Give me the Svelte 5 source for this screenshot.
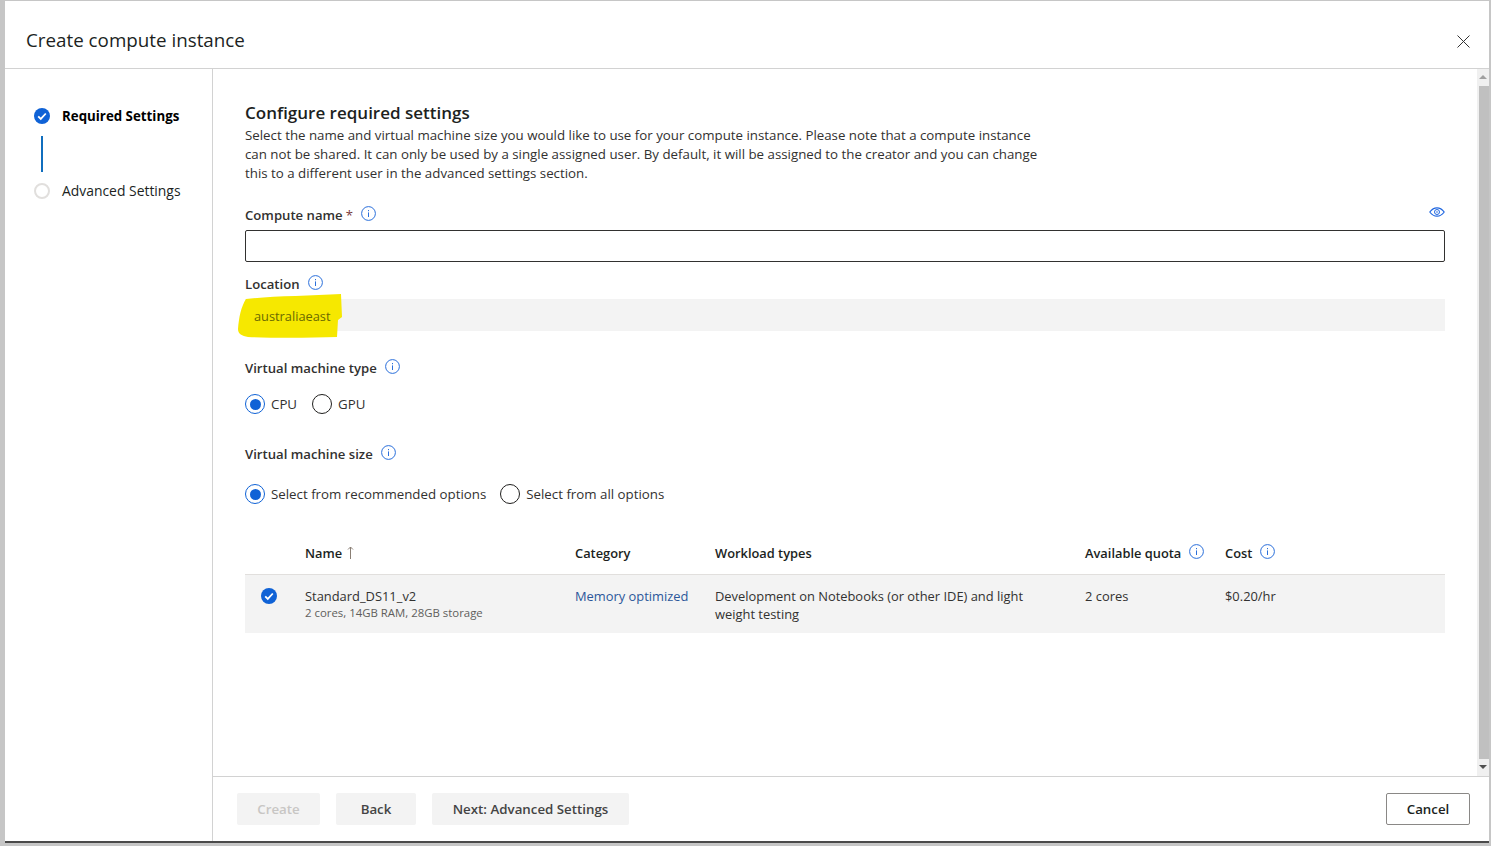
<script>
  const columns = ['Name', 'Category', 'Workload types', 'Available quota', 'Cost'];
</script>

{#snippet info()}
  <svg class="info" width="15" height="15" viewBox="0 0 15 15" aria-hidden="true">
    <circle cx="7.5" cy="7.5" r="6.9" fill="none" stroke="#2a6fdb" stroke-width="1" />
    <rect x="7" y="6.4" width="1" height="4.6" fill="#2a6fdb" />
    <rect x="7" y="4" width="1" height="1.2" fill="#2a6fdb" />
  </svg>
{/snippet}

{#snippet radio(on)}
  <span class="radio" class:on></span>
{/snippet}

{#snippet check(size)}
  <svg width={size} height={size} viewBox="0 0 16 16" aria-hidden="true">
    <circle cx="8" cy="8" r="8" fill="#0f62d6" />
    <path d="M4.2 8.3l2.6 2.6 5-5.4" fill="none" stroke="#fff" stroke-width="1.8" />
  </svg>
{/snippet}

<div class="dialog">
  <header class="title">
    <h1>Create compute instance</h1>
    <svg class="close" width="13" height="13" viewBox="0 0 13 13" aria-hidden="true">
      <path d="M0.5 0.5l12 12M12.5 0.5l-12 12" stroke="#333" stroke-width="1" fill="none" />
    </svg>
  </header>

  <div class="body">
    <nav class="steps">
      <div class="step done">
        <span class="mark">{@render check(16)}</span>
        <span>Required Settings</span>
      </div>
      <div class="connector"></div>
      <div class="step">
        <span class="mark"><span class="todo"></span></span>
        <span class="step-name">Advanced Settings</span>
      </div>
    </nav>

    <div class="right">
      <div class="scroller">
        <main class="content">
          <h2>Configure required settings</h2>
          <p class="desc">
            Select the name and virtual machine size you would like to use for your compute instance. Please note that a compute instance<br />
            can not be shared. It can only be used by a single assigned user. By default, it will be assigned to the creator and you can change<br />
            this to a different user in the advanced settings section.
          </p>

          <div class="label name-label">
            <span class="label-text">Compute name <i>*</i> {@render info()}</span>
            <svg class="eye" width="16" height="10" viewBox="0 0 16 10" aria-hidden="true">
              <path d="M0.8 5C3 2 5.4 0.8 8 0.8S13 2 15.2 5C13 8 10.6 9.2 8 9.2S3 8 0.8 5z" fill="none" stroke="#1f66e0" stroke-width="1.2" />
              <circle cx="8" cy="5" r="2.5" fill="none" stroke="#1f66e0" stroke-width="1" />
              <circle cx="8" cy="5" r="0.8" fill="#1f66e0" />
            </svg>
          </div>
          <div class="input"></div>

          <div class="label loc-label"><span class="label-text">Location {@render info()}</span></div>
          <div class="readonly">
            <span class="loc-value">australiaeast</span>
            <svg class="marker" width="105" height="46" viewBox="0 0 105 46" aria-hidden="true">
              <path d="M8 6C31 3 71 3 103 1L104 24 100 27 99 44C71 45 31 45 10 44 4 43 0 41 0 36 1 24 3 14 8 6z" fill="#f6e800" />
            </svg>
          </div>

          <div class="label vm-type"><span class="label-text">Virtual machine type {@render info()}</span></div>
          <div class="radios type-radios">
            <label>{@render radio(true)}CPU</label>
            <label>{@render radio(false)}GPU</label>
          </div>

          <div class="label vm-size"><span class="label-text">Virtual machine size {@render info()}</span></div>
          <div class="radios size-radios">
            <label>{@render radio(true)}Select from recommended options</label>
            <label>{@render radio(false)}Select from all options</label>
          </div>

          <div class="table">
            <div class="row head">
              <div class="cell"></div>
              <div class="cell">
                {columns[0]}
                <svg class="sort" width="7" height="13" viewBox="0 0 7 13" aria-hidden="true">
                  <path d="M3.5 13V1M1 3.5L3.5 1 6 3.5" fill="none" stroke="#8a7f75" stroke-width="1" />
                </svg>
              </div>
              <div class="cell">{columns[1]}</div>
              <div class="cell">{columns[2]}</div>
              <div class="cell">{columns[3]} {@render info()}</div>
              <div class="cell">{columns[4]} {@render info()}</div>
            </div>
            <div class="row item">
              <div class="cell pick">{@render check(16)}</div>
              <div class="cell">
                Standard_DS11_v2
                <div class="sub">2 cores, 14GB RAM, 28GB storage</div>
              </div>
              <div class="cell"><span class="link">Memory optimized</span></div>
              <div class="cell">Development on Notebooks (or other IDE) and light<br />weight testing</div>
              <div class="cell">2 cores</div>
              <div class="cell">$0.20/hr</div>
            </div>
          </div>
        </main>
        <div class="scrollbar">
          <span class="arrow up"></span>
          <div class="thumb"></div>
          <span class="arrow down"></span>
        </div>
      </div>

      <footer class="actions">
        <button class="btn disabled">Create</button>
        <button class="btn back">Back</button>
        <button class="btn next">Next: Advanced Settings</button>
        <button class="btn cancel">Cancel</button>
      </footer>
    </div>
  </div>
</div>

<style>
  :global(body) {
    margin: 0;
    background: #c6c6c6;
  }

  .dialog {
    box-sizing: border-box;
    height: 842px;
    margin: 1px 2px 0 5px;
    background: #fff;
    border-bottom: 2px solid #4a4a4a;
    display: flex;
    flex-direction: column;
    font-family: "Open Sans", "Noto Sans", sans-serif;
    font-size: 13.3px;
    color: #323130;
  }

  .title {
    flex: none;
    border-bottom: 1px solid #d2d2d2;
    display: flex;
    align-items: center;
    justify-content: space-between;
    padding: 22px 19px 12px 21px;
    box-sizing: border-box;
    height: 68px;
  }

  h1 {
    margin: 0;
    font-size: 18.8px;
    font-weight: 400;
    color: #201f1e;
  }

  .close { margin-top: 3px; }

  .body {
    flex: 1;
    display: flex;
    min-height: 0;
  }

  .steps {
    flex: none;
    border-right: 1px solid #d2d2d2;
    padding: 37px 0 0 29px;
    box-sizing: border-box;
    width: 208px;
  }

  .step {
    display: flex;
    align-items: center;
    height: 20px;
    font-size: 13.9px;
    color: #201f1e;
  }

  .step.done { font-weight: 700; font-size: 13.3px; color: #000; }

  .step-name { margin-top: -2px; }

  .mark {
    width: 16px;
    height: 16px;
    margin-right: 12px;
    display: flex;
  }

  .todo {
    width: 12px;
    height: 12px;
    border: 2px solid #e1dfdd;
    border-radius: 50%;
  }

  .connector {
    width: 2px;
    height: 36px;
    margin: 10px 0 9px 7px;
    background: #106ebe;
  }

  .right {
    flex: 1;
    display: flex;
    flex-direction: column;
    min-width: 0;
  }

  .scroller {
    flex: 1;
    display: flex;
    min-height: 0;
  }

  .content {
    flex: 1;
    min-width: 0;
    padding: 33px 32px 0;
  }

  h2 {
    margin: 0 0 2px;
    font-size: 17px;
    line-height: 22px;
    font-weight: 600;
    color: #201f1e;
  }

  .desc {
    margin: 0;
    line-height: 19px;
    color: #323130;
  }

  .label {
    display: flex;
    align-items: center;
    justify-content: space-between;
    height: 20px;
    font-weight: 600;
    font-size: 13.15px;
    color: #323130;
  }

  .label-text {
    display: flex;
    align-items: center;
    gap: 8px;
  }

  .label-text .info { margin-top: -3px; }

  .label-text i { margin-left: -5px; color: #7a3b3b; font-style: normal; font-weight: 400; }

  .name-label { margin-top: 22px; }

  .eye { margin-top: -6px; }

  .input {
    height: 32px;
    box-sizing: border-box;
    margin-top: 5px;
    border: 1px solid #323130;
    border-radius: 2px;
  }

  .loc-label { margin-top: 12px; }

  .readonly {
    position: relative;
    height: 32px;
    margin-top: 5px;
    background: #f3f3f3;
    display: flex;
    align-items: center;
    padding-left: 9px;
    padding-top: 1px;
    box-sizing: border-box;
  }

  .loc-value { position: relative; z-index: 1; color: #6a6a00; font-size: 12.8px; }

  .marker {
    position: absolute;
    left: -7px;
    top: -6px;
  }

  .vm-type { margin-top: 27px; }

  .radios {
    display: flex;
    height: 22px;
    align-items: center;
  }

  .radios label {
    display: flex;
    align-items: center;
    gap: 6px;
  }

  .type-radios { margin-top: 15px; gap: 15px; }
  .vm-size { margin-top: 29px; }
  .size-radios { margin-top: 19px; gap: 14px; }

  .radio {
    width: 20px;
    height: 20px;
    box-sizing: border-box;
    border: 1.5px solid #201f1e;
    border-radius: 50%;
    position: relative;
    flex: none;
  }

  .radio.on { border-color: #0f62d6; }

  .radio.on::after {
    content: "";
    position: absolute;
    inset: 3.5px;
    border-radius: 50%;
    background: #0f62d6;
  }

  .table { margin-top: 27px; }

  .row {
    display: grid;
    grid-template-columns: 60px 270px 140px 370px 140px 1fr;
  }

  .head {
    height: 43px;
    box-sizing: border-box;
    border-bottom: 1px solid #e1dfdd;
    font-weight: 600;
    font-size: 12.85px;
    color: #201f1e;
    align-items: center;
  }

  .head .cell {
    display: flex;
    align-items: center;
    gap: 8px;
  }

  .head .info { margin-top: -3px; }

  .sort { margin-left: -3px; margin-top: -2px; }

  .item {
    height: 58px;
    background: #f3f3f3;
    padding-top: 12px;
    box-sizing: border-box;
    line-height: 18px;
    font-size: 12.9px;
  }

  .pick { padding-left: 16px; padding-top: 1px; }

  .sub { margin-top: 1px; font-size: 11.4px; line-height: 14px; color: #605e5c; }

  .link { color: #2b579a; }

  .actions {
    height: 65px;
    flex: none;
    box-sizing: border-box;
    border-top: 1px solid #d2d2d2;
    display: flex;
    align-items: flex-start;
    gap: 16px;
    padding: 16px 19px 0 24px;
  }

  .btn {
    height: 32px;
    border: none;
    border-radius: 2px;
    background: #f3f3f3;
    font: inherit;
    font-weight: 600;
    color: #444;
    padding: 0;
  }

  .disabled { width: 83px; color: #c8c6c4; }
  .back { width: 80px; }
  .next { width: 197px; }

  .cancel {
    width: 84px;
    margin-left: auto;
    background: #fff;
    border: 1px solid #8a8886;
    color: #201f1e;
  }

  .scrollbar {
    width: 12px;
    flex: none;
    background: #f0f0f0;
    display: flex;
    flex-direction: column;
    align-items: flex-end;
  }

  .thumb {
    flex: 1;
    width: 10px;
    background: #c0c0c0;
  }

  .arrow {
    height: 17px;
    width: 12px;
    position: relative;
    flex: none;
  }

  .arrow::after {
    content: "";
    position: absolute;
    left: 2px;
    border-left: 4px solid transparent;
    border-right: 4px solid transparent;
  }

  .up::after { top: 6px; border-bottom: 4px solid #a0a0a0; }
  .down::after { top: 6px; border-top: 4px solid #505050; }
</style>
